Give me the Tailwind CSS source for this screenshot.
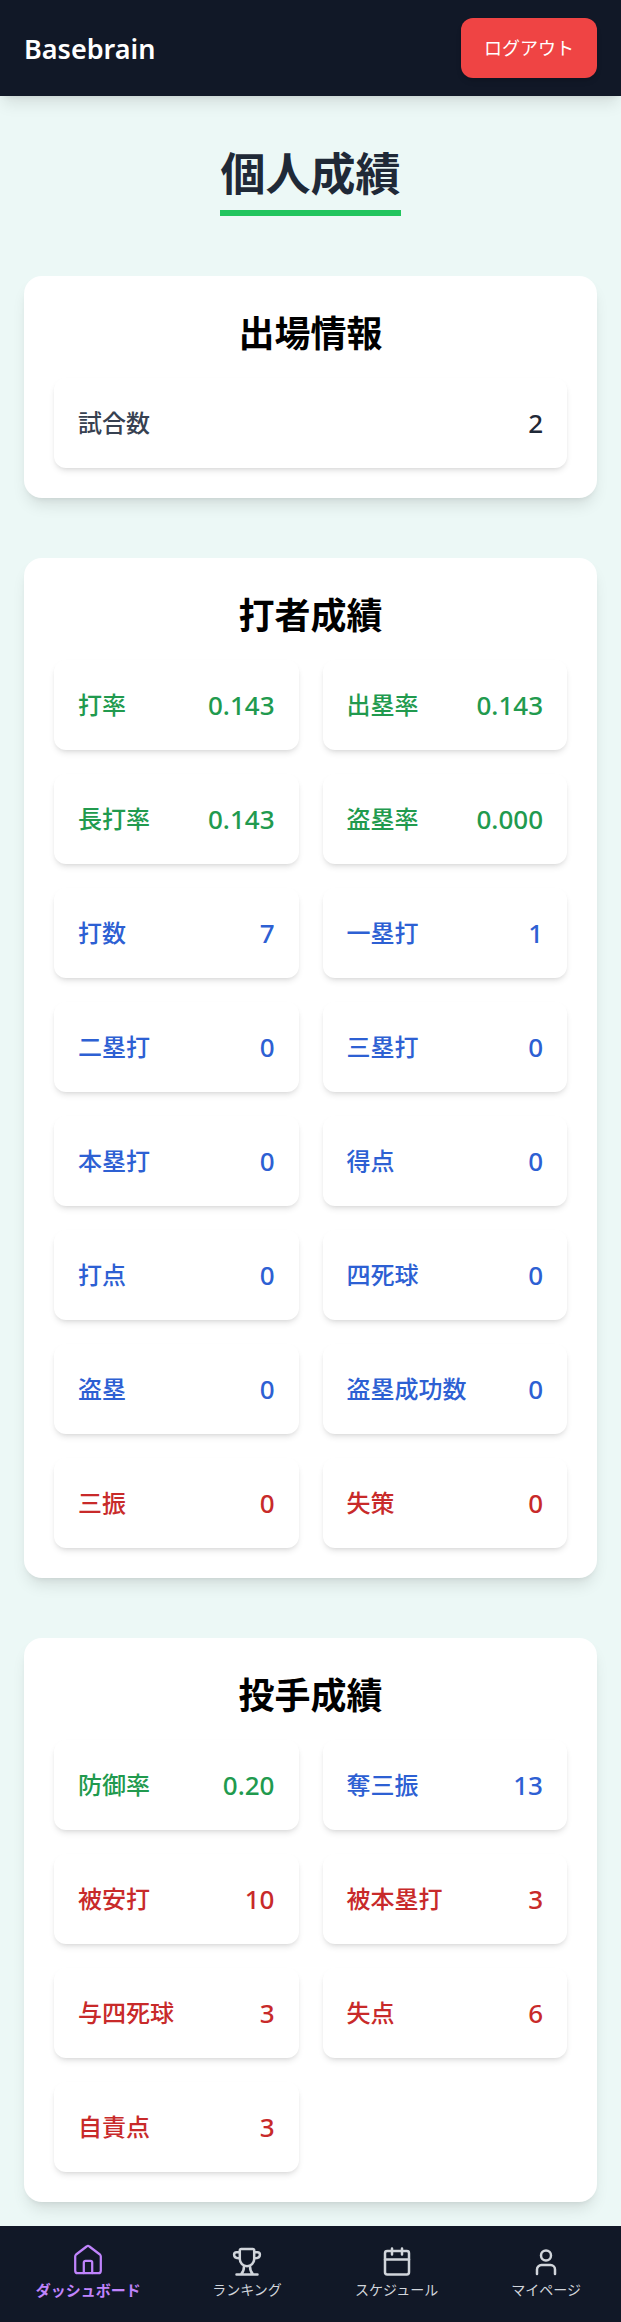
<!DOCTYPE html>
<html lang="ja">
<head>
<meta charset="utf-8">
<meta name="viewport" content="width=device-width, initial-scale=1">
<title>Basebrain</title>
<script src="https://cdn.jsdelivr.net/npm/@tailwindcss/browser@4"></script>
</head>
<body class="flex min-h-screen flex-col bg-[#ecf8f6] font-['Noto_Sans','Noto_Sans_CJK_JP',sans-serif] text-black">
<header class="flex h-24 items-center justify-between bg-[#111827] px-6 shadow-lg">
  <a href="#" class="pt-0.5 text-[27px] leading-9 font-semibold text-white">Basebrain</a>
  <button type="button" class="h-15 rounded-xl bg-[#ef4444] px-[23px] text-[18px] text-white shadow-md">ログアウト</button>
</header>

<main class="flex grow flex-col gap-15 px-6 pt-12 pb-6">
  <h1 class="self-center border-b-6 border-[#22c55e] pb-1.5 text-[45px] leading-[60px] font-bold text-[#1f2937]">個人成績</h1>

  <section class="rounded-[18px] bg-white p-[30px] shadow-lg">
    <h2 class="mb-5 pt-1 text-center text-[36px] leading-12 font-bold">出場情報</h2>
    <dl class="grid gap-6">
      <div class="flex items-center justify-between rounded-xl p-6 shadow-md"><dt class="text-2xl font-medium text-[#374151]">試合数</dt><dd class="text-[26px] leading-[42px] font-medium text-[#1f2937]">2</dd></div>
    </dl>
  </section>

  <section class="rounded-[18px] bg-white p-[30px] shadow-lg">
    <h2 class="mb-5 pt-1 text-center text-[36px] leading-12 font-bold">打者成績</h2>
    <dl class="grid grid-cols-2 gap-6">
      <div class="flex items-center justify-between rounded-xl p-6 text-[#219a4e] shadow-md"><dt class="text-2xl font-medium">打率</dt><dd class="text-[26px] leading-[42px] font-medium">0.143</dd></div>
      <div class="flex items-center justify-between rounded-xl p-6 text-[#219a4e] shadow-md"><dt class="text-2xl font-medium">出塁率</dt><dd class="text-[26px] leading-[42px] font-medium">0.143</dd></div>
      <div class="flex items-center justify-between rounded-xl p-6 text-[#219a4e] shadow-md"><dt class="text-2xl font-medium">長打率</dt><dd class="text-[26px] leading-[42px] font-medium">0.143</dd></div>
      <div class="flex items-center justify-between rounded-xl p-6 text-[#219a4e] shadow-md"><dt class="text-2xl font-medium">盗塁率</dt><dd class="text-[26px] leading-[42px] font-medium">0.000</dd></div>
      <div class="flex items-center justify-between rounded-xl p-6 text-[#2d60d3] shadow-md"><dt class="text-2xl font-medium">打数</dt><dd class="text-[26px] leading-[42px] font-medium">7</dd></div>
      <div class="flex items-center justify-between rounded-xl p-6 text-[#2d60d3] shadow-md"><dt class="text-2xl font-medium">一塁打</dt><dd class="text-[26px] leading-[42px] font-medium">1</dd></div>
      <div class="flex items-center justify-between rounded-xl p-6 text-[#2d60d3] shadow-md"><dt class="text-2xl font-medium">二塁打</dt><dd class="text-[26px] leading-[42px] font-medium">0</dd></div>
      <div class="flex items-center justify-between rounded-xl p-6 text-[#2d60d3] shadow-md"><dt class="text-2xl font-medium">三塁打</dt><dd class="text-[26px] leading-[42px] font-medium">0</dd></div>
      <div class="flex items-center justify-between rounded-xl p-6 text-[#2d60d3] shadow-md"><dt class="text-2xl font-medium">本塁打</dt><dd class="text-[26px] leading-[42px] font-medium">0</dd></div>
      <div class="flex items-center justify-between rounded-xl p-6 text-[#2d60d3] shadow-md"><dt class="text-2xl font-medium">得点</dt><dd class="text-[26px] leading-[42px] font-medium">0</dd></div>
      <div class="flex items-center justify-between rounded-xl p-6 text-[#2d60d3] shadow-md"><dt class="text-2xl font-medium">打点</dt><dd class="text-[26px] leading-[42px] font-medium">0</dd></div>
      <div class="flex items-center justify-between rounded-xl p-6 text-[#2d60d3] shadow-md"><dt class="text-2xl font-medium">四死球</dt><dd class="text-[26px] leading-[42px] font-medium">0</dd></div>
      <div class="flex items-center justify-between rounded-xl p-6 text-[#2d60d3] shadow-md"><dt class="text-2xl font-medium">盗塁</dt><dd class="text-[26px] leading-[42px] font-medium">0</dd></div>
      <div class="flex items-center justify-between rounded-xl p-6 text-[#2d60d3] shadow-md"><dt class="text-2xl font-medium">盗塁成功数</dt><dd class="text-[26px] leading-[42px] font-medium">0</dd></div>
      <div class="flex items-center justify-between rounded-xl p-6 text-[#c82a2a] shadow-md"><dt class="text-2xl font-medium">三振</dt><dd class="text-[26px] leading-[42px] font-medium">0</dd></div>
      <div class="flex items-center justify-between rounded-xl p-6 text-[#c82a2a] shadow-md"><dt class="text-2xl font-medium">失策</dt><dd class="text-[26px] leading-[42px] font-medium">0</dd></div>
    </dl>
  </section>

  <section class="rounded-[18px] bg-white p-[30px] shadow-lg">
    <h2 class="mb-5 pt-1 text-center text-[36px] leading-12 font-bold">投手成績</h2>
    <dl class="grid grid-cols-2 gap-6">
      <div class="flex items-center justify-between rounded-xl p-6 text-[#219a4e] shadow-md"><dt class="text-2xl font-medium">防御率</dt><dd class="text-[26px] leading-[42px] font-medium">0.20</dd></div>
      <div class="flex items-center justify-between rounded-xl p-6 text-[#2d60d3] shadow-md"><dt class="text-2xl font-medium">奪三振</dt><dd class="text-[26px] leading-[42px] font-medium">13</dd></div>
      <div class="flex items-center justify-between rounded-xl p-6 text-[#c82a2a] shadow-md"><dt class="text-2xl font-medium">被安打</dt><dd class="text-[26px] leading-[42px] font-medium">10</dd></div>
      <div class="flex items-center justify-between rounded-xl p-6 text-[#c82a2a] shadow-md"><dt class="text-2xl font-medium">被本塁打</dt><dd class="text-[26px] leading-[42px] font-medium">3</dd></div>
      <div class="flex items-center justify-between rounded-xl p-6 text-[#c82a2a] shadow-md"><dt class="text-2xl font-medium">与四死球</dt><dd class="text-[26px] leading-[42px] font-medium">3</dd></div>
      <div class="flex items-center justify-between rounded-xl p-6 text-[#c82a2a] shadow-md"><dt class="text-2xl font-medium">失点</dt><dd class="text-[26px] leading-[42px] font-medium">6</dd></div>
      <div class="flex items-center justify-between rounded-xl p-6 text-[#c82a2a] shadow-md"><dt class="text-2xl font-medium">自責点</dt><dd class="text-[26px] leading-[42px] font-medium">3</dd></div>
    </dl>
  </section>
</main>

<nav class="grid h-24 grid-cols-[9fr_8fr_8fr_8fr] items-center bg-[#111827] pb-1 pl-1 text-[14px] leading-6 text-[#d1d5db]">
  <a href="#" aria-current="page" class="flex flex-col items-center text-[15px] font-bold text-[#c084fc]">
    <svg class="size-9" viewBox="0 0 36 36" fill="none" stroke="currentColor" stroke-width="2.25" stroke-linecap="round" stroke-linejoin="round" aria-hidden="true"><path d="M5.2 14.5a2.8 2.8 0 0 1 .9-2L16.6 4.5a2.1 2.1 0 0 1 2.8 0L29.900 12.500a2.800 2.800 0 0 1 .9 2V28.700a2.500 2.500 0 0 1-2.500 2.500H7.700a2.500 2.500 0 0 1-2.500-2.500z"/><path d="M13.8 31V20.500a1.700 1.700 0 0 1 1.700-1.700h5a1.700 1.700 0 0 1 1.700 1.700V31"/></svg>
    ダッシュボード
  </a>
  <a href="#" class="flex flex-col items-center">
    <svg class="size-9" viewBox="0 0 36 36" fill="none" stroke="currentColor" stroke-width="2.5" stroke-linecap="round" stroke-linejoin="round" aria-hidden="true"><path d="M12.200 7h11.600a1.400 1.400 0 0 1 1.400 1.500V17a7.200 7.200 0 0 1-14.400 0V8.500A1.400 1.400 0 0 1 12.200 7z"/><path d="M10.800 10.200H7.600a2.500 2.500 0 0 0-2.500 2.500c0 2.300 1.800 3.600 5.700 3.600M25.200 10.200h3.200a2.500 2.500 0 0 1 2.500 2.500c0 2.300-1.800 3.600-5.700 3.600M7.500 32.500h21M15 24.200c0 4-1 6.300-3 8.300M21 24.200c0 4 1 6.300 3 8.300"/></svg>
    ランキング
  </a>
  <a href="#" class="flex flex-col items-center">
    <svg class="size-9" viewBox="0 0 36 36" fill="none" stroke="currentColor" stroke-width="2.5" stroke-linecap="round" stroke-linejoin="round" aria-hidden="true"><rect x="6" y="9" width="24" height="23.500" rx="2.200"/><path d="M6 17.500h24M13 6.500v6M23 6.500v6"/></svg>
    スケジュール
  </a>
  <a href="#" class="flex flex-col items-center">
    <svg class="size-9" viewBox="0 0 36 36" fill="none" stroke="currentColor" stroke-width="2.5" stroke-linecap="round" stroke-linejoin="round" aria-hidden="true"><circle cx="18" cy="13.500" r="5"/><path d="M9 32v-4.500a4.500 4.500 0 0 1 4.500-4.500h9a4.500 4.500 0 0 1 4.500 4.500V32"/></svg>
    マイページ
  </a>
</nav>
</body>
</html>
